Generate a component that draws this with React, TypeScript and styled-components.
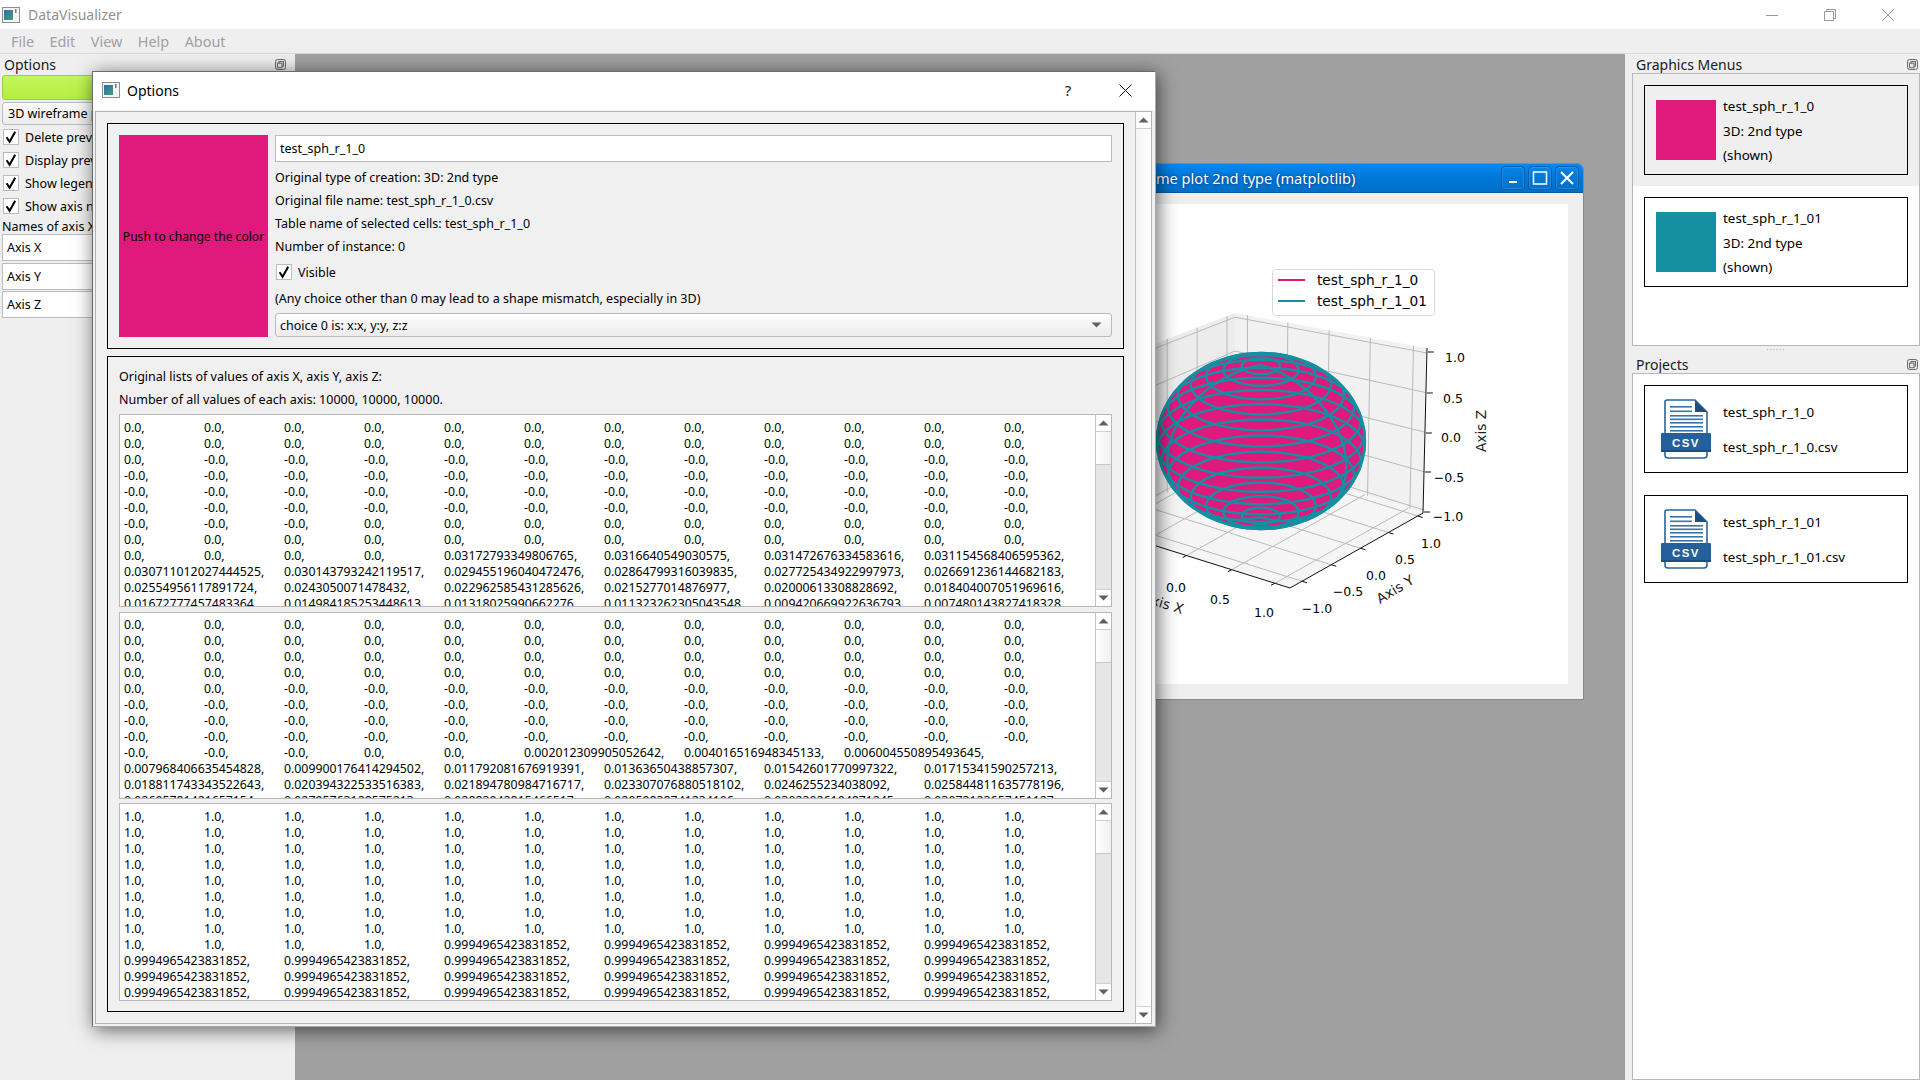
import { useMemo } from 'react';
import styled, { createGlobalStyle } from 'styled-components';

const PINK = '#e0197d';
const TEAL = '#158fa2';

const GlobalStyle = createGlobalStyle`
  html, body { margin: 0; padding: 0; width: 1920px; height: 1080px; overflow: hidden; background: #efefef; }
  * { box-sizing: border-box; }
  body { font-family: "Noto Sans", "Open Sans", sans-serif; font-size: 12.5px; color: #000; }
`;

const AppWindow = styled.div`
  position: relative;
  width: 1920px;
  height: 1080px;
  display: flex;
  flex-direction: column;
  overflow: hidden;
`;

const TitleBar = styled.div`
  height: 29px;
  background: #fff;
  display: flex;
  align-items: center;
  padding: 0 3px 0 2px;
  font-size: 14px;
  color: #8f8f8f;
`;

const TitleText = styled.span`
  flex: 1;
  margin-left: 8px;
`;

const WinButton = styled.div`
  width: 58px;
  height: 29px;
  display: flex;
  align-items: center;
  justify-content: center;
`;

const MenuBar = styled.div`
  height: 25px;
  background: #efefef;
  border-bottom: 1px solid #d9d9d9;
  display: flex;
  align-items: center;
  padding-left: 11px;
  gap: 15.5px;
  font-size: 14.4px;
  color: #a0a0a0;
`;

const Main = styled.div`
  flex: 1;
  display: flex;
  min-height: 0;
`;

const LeftDock = styled.div`
  width: 295px;
  background: #efefef;
  padding: 0 2px;
  display: flex;
  flex-direction: column;
`;

const DockTitle = styled.div<{ $h: number; $pad: number; $padRight: number; $padTop?: number }>`
  height: ${(p) => p.$h}px;
  display: flex;
  align-items: center;
  justify-content: space-between;
  font-size: 14px;
  color: #1a1a1a;
  padding-left: ${(p) => p.$pad}px;
  padding-right: ${(p) => p.$padRight}px;
  padding-top: ${(p) => p.$padTop ?? 0}px;
  flex: none;
`;

const GreenButton = styled.div`
  height: 25px;
  border: 1px solid #97cf45;
  border-radius: 3px;
  background: linear-gradient(#c4f65c, #b3ee3f);
  flex: none;
`;

const DockCombo = styled.div`
  margin-top: 2px;
  height: 23px;
  border: 1px solid #bcbcbc;
  border-radius: 3px;
  background: linear-gradient(#fafafa, #ececec);
  padding-left: 5px;
  line-height: 21px;
  font-size: 12.5px;
  white-space: nowrap;
`;

const CheckList = styled.div`
  margin-top: 4px;
  display: flex;
  flex-direction: column;
  gap: 7px;
`;

const CheckRow = styled.div`
  height: 16px;
  display: flex;
  align-items: center;
  gap: 6px;
  padding-left: 1px;
  white-space: nowrap;
`;

const CheckBox = styled.div`
  width: 16px;
  height: 16px;
  background: #fff;
  border: 1px solid #bcbcbc;
  display: flex;
  align-items: center;
  justify-content: center;
  flex: none;
`;

const NamesLabel = styled.div`
  margin-top: 4px;
  height: 16px;
  line-height: 17px;
  white-space: nowrap;
`;

const AxisInputs = styled.div`
  display: flex;
  flex-direction: column;
  gap: 1.5px;
`;

const AxisInput = styled.div`
  height: 27px;
  background: #fff;
  border: 1px solid #bcbcbc;
  padding-left: 4px;
  line-height: 25px;
`;

const Mdi = styled.div`
  flex: 1;
  position: relative;
  background: #a0a0a0;
`;

const SubWindow = styled.div`
  position: absolute;
  left: 765px;
  top: 109px;
  width: 524px;
  height: 537px;
  background: #efefef;
  border: 1px solid #7f8a94;
  border-radius: 6px 6px 0 0;
  display: flex;
  flex-direction: column;
`;

const SubTitle = styled.div`
  height: 29px;
  flex: none;
  background: linear-gradient(#0788f2 0%, #0079da 45%, #006fc6 100%);
  border-bottom: 1px solid #0a5a9e;
  border-radius: 5px 5px 0 0;
  display: flex;
  align-items: center;
  padding: 0 4px 0 24px;
  color: #fff;
  font-size: 14.6px;
  text-shadow: 0 0 3px rgba(0, 30, 70, 0.8);
`;

const SubTitleText = styled.span`
  flex: 1;
  white-space: nowrap;
`;

const SubButtons = styled.div`
  display: flex;
  gap: 3px;
`;

const SubButton = styled.div`
  width: 24px;
  height: 24px;
  border: 1px solid #0a5ea8;
  box-shadow: inset 0 0 0 1px rgba(120, 190, 250, 0.25);
  border-radius: 4px;
  display: flex;
  align-items: center;
  justify-content: center;
`;

const PlotCanvas = styled.div`
  margin: 11px 15px 15px 14px;
  flex: 1;
  background: #fff;
`;

const PlotSvg = styled.svg`
  display: block;
  width: 100%;
  height: 100%;
`;

const RightDock = styled.div`
  width: 295px;
  background: #efefef;
  padding-left: 7px;
  display: flex;
  flex-direction: column;
`;

const DockFrame = styled.div<{ $h?: number }>`
  border: 1px solid #b8b8b8;
  background: #fff;
  ${(p) => (p.$h ? `height: ${p.$h}px; flex: none;` : 'flex: 1;')}
`;

const DockSplitter = styled.div`
  height: 8px;
  flex: none;
  display: flex;
  align-items: center;
  justify-content: center;
  color: #aaa;
  font-size: 8px;
  letter-spacing: 1px;
  line-height: 8px;
`;

const GraphRow = styled.div<{ $selected?: boolean }>`
  height: 112px;
  padding: 11px;
  background: ${(p) => (p.$selected ? '#efefef' : '#fff')};
`;

const GraphCard = styled.div`
  height: 90px;
  border: 1px solid #000;
  display: flex;
  align-items: center;
  padding-left: 11px;
  gap: 7px;
`;

const Swatch = styled.div<{ $color: string }>`
  width: 60px;
  height: 60px;
  background: ${(p) => p.$color};
  flex: none;
`;

const CardLines = styled.div<{ $lh: number }>`
  font-size: 13.4px;
  line-height: ${(p) => p.$lh}px;
  padding-top: 2px;
  white-space: nowrap;
`;

const ProjectRow = styled.div`
  height: 110px;
  padding: 11px;
`;

const ProjectCard = styled.div`
  height: 88px;
  border: 1px solid #000;
  display: flex;
  align-items: center;
  padding-left: 16px;
  gap: 12px;
`;

/* Options dialog floating over the whole app */
const Dialog = styled.div`
  position: absolute;
  left: 92px;
  top: 71px;
  width: 1064px;
  height: 956px;
  background: #f0f0f0;
  border: 1px solid #6a6a6a;
  border-right-color: #a8a8a8;
  border-bottom-color: #a8a8a8;
  box-shadow: 2px 3px 18px rgba(0, 0, 0, 0.6);
  display: flex;
  flex-direction: column;
`;

const DialogTitle = styled.div`
  height: 38px;
  flex: none;
  background: #fff;
  display: flex;
  align-items: center;
  padding: 0 0 2px 9px;
  gap: 7px;
  font-size: 14px;
`;

const DialogTitleText = styled.span`
  flex: 1;
`;

const DialogAction = styled.div<{ $w: number }>`
  width: ${(p) => p.$w}px;
  display: flex;
  justify-content: center;
  font-size: 15px;
  color: #222;
`;

const DialogFrame = styled.div`
  flex: 1;
  margin: 1px 3px 2px 2px;
  border: 1px solid #b4b4b4;
  display: flex;
  min-height: 0;
`;

const DialogBody = styled.div`
  flex: 1;
  padding: 11px;
  display: flex;
  flex-direction: column;
  gap: 7px;
  min-width: 0;
`;

const Panel = styled.div`
  border: 1px solid #000;
  padding: 11px;
  flex: none;
`;

const TopPanel = styled(Panel)`
  height: 226px;
  display: flex;
  gap: 7px;
`;

const ColorButton = styled.div`
  width: 149px;
  height: 202px;
  background: ${PINK};
  display: flex;
  align-items: center;
  justify-content: center;
  white-space: nowrap;
  flex: none;
  font-size: 12.1px;
`;

const InfoColumn = styled.div`
  flex: 1;
  display: flex;
  flex-direction: column;
  min-width: 0;
`;

const NameInput = styled.div`
  height: 27px;
  background: #fff;
  border: 1px solid #bcbcbc;
  padding-left: 4px;
  line-height: 25px;
  margin-bottom: 4px;
  flex: none;
`;

const InfoLine = styled.div`
  height: 23px;
  line-height: 23px;
  white-space: nowrap;
  flex: none;
`;

const VisibleRow = styled.div`
  margin: 6px 0 7px;
  display: flex;
  align-items: center;
  height: 16px;
  gap: 6px;
  padding-left: 1px;
`;

const ChoiceCombo = styled.div`
  margin-top: 3px;
  height: 24px;
  flex: none;
  border: 1px solid #bcbcbc;
  border-radius: 3px;
  background: linear-gradient(#fdfdfd, #ececec);
  display: flex;
  align-items: center;
  justify-content: space-between;
  padding: 0 9px 0 4px;
`;

const BottomPanel = styled(Panel)`
  height: 656px;
  padding-top: 8px;
  display: flex;
  flex-direction: column;
`;

const Editors = styled.div`
  margin-top: 3px;
  display: flex;
  flex-direction: column;
  gap: 4.5px;
`;

const Editor = styled.div<{ $h: number }>`
  height: ${(p) => p.$h}px;
  background: #fff;
  border: 1px solid #b8b8b8;
  display: flex;
  overflow: hidden;
`;

const EditorText = styled.pre<{ $top: number }>`
  flex: 1;
  margin: 0;
  padding: ${(p) => p.$top}px 0 0 4px;
  font: inherit;
  font-size: 12.3px;
  line-height: 16px;
  tab-size: 80px;
  overflow: hidden;
  white-space: pre;
`;

const ScrollBar = styled.div`
  width: 16px;
  flex: none;
  border-left: 1px solid #c4c4c4;
  background: #e6e6e6;
  display: flex;
  flex-direction: column;
`;

const ScrollArrow = styled.div<{ $up?: boolean }>`
  height: 17px;
  flex: none;
  background: #fff;
  display: flex;
  align-items: center;
  justify-content: center;
  ${(p) => (p.$up ? 'border-bottom: 1px solid #d0d0d0;' : 'border-top: 1px solid #d0d0d0;')}
`;

const ScrollThumb = styled.div<{ $h: number }>`
  height: ${(p) => p.$h}px;
  flex: none;
  background: linear-gradient(90deg, #fff, #f0f0f0);
  border-bottom: 1px solid #c8c8c8;
`;

const ScrollTrack = styled.div`
  flex: 1;
`;

const OuterScroll = styled(ScrollBar)`
  background: linear-gradient(90deg, #f4f4f4, #fff);
  border-left: 1px solid #c0c0c0;
`;

const Triangle = ({ up }: { up?: boolean }) => (
  <svg width="11" height="6" viewBox="0 0 11 6">
    <path d={up ? 'M5.5 0.5 L10.5 5.5 H0.5 Z' : 'M0.5 0.5 H10.5 L5.5 5.5 Z'} fill="#5f5f5f" />
  </svg>
);

const Tick = () => (
  <svg width="14" height="14" viewBox="0 0 14 14">
    <path d="M2.6 7.2 L5.6 11.8 L11.2 1.8" fill="none" stroke="#000" strokeWidth="2" />
  </svg>
);

const AppIcon = () => (
  <svg width="18" height="16" viewBox="0 0 18 16">
    <defs>
      <linearGradient id="appIconFill" x1="0" y1="0" x2="1" y2="1">
        <stop offset="0" stopColor="#2f6fa8" />
        <stop offset="1" stopColor="#3fa07a" />
      </linearGradient>
    </defs>
    <rect x="0.5" y="0.5" width="17" height="15" fill="#f4f4f4" stroke="#8d8d8d" />
    <rect x="2" y="3" width="9" height="10" fill="url(#appIconFill)" />
    <rect x="13" y="2" width="1.5" height="4" fill="#777" />
  </svg>
);

const FloatIcon = () => (
  <svg width="11" height="11" viewBox="0 0 11 11">
    <rect x="0.5" y="0.5" width="10" height="10" rx="2" fill="#e6e6e6" stroke="#6a6a6a" />
    <rect x="4" y="2.5" width="4.5" height="4.5" fill="none" stroke="#6a6a6a" />
    <rect x="2.5" y="4.2" width="4.5" height="4.5" fill="#e6e6e6" stroke="#6a6a6a" />
  </svg>
);

const CsvIcon = () => (
  <svg width="50" height="60" viewBox="0 0 50 60">
    <path d="M6 1 H34 L46 13 V56 Q46 59 43 59 H7 Q4 59 4 56 V3 Q4 1 6 1 Z" fill="#fff" stroke="#2a6599" strokeWidth="1.6" />
    <path d="M34 1.5 L46 13 H34 Z" fill="#1f4f7e" />
    {[7, 11.5].map((y) => (
      <rect key={y} x="9" y={y} width="22" height="1.6" fill="#3a74a8" />
    ))}
    {[16, 19.5, 23, 27, 31].map((y) => (
      <rect key={y} x="9" y={y} width="33" height="1.6" fill="#3a74a8" />
    ))}
    <rect x="0" y="34" width="50" height="19" rx="1" fill="#26609a" />
    <rect x="0" y="51" width="50" height="2" fill="#1d4e80" />
    <text x="25" y="48" textAnchor="middle" fontFamily="'Liberation Sans', sans-serif" fontWeight="700" fontSize="11.5" letterSpacing="1.4" fill="#fff">
      CSV
    </text>
  </svg>
);

// data of the three text edits, tab separated like the Qt widget shows them
const rep = (s: string, n: number) => Array(n).fill(s);
const row = (...cells: string[]) => cells.join('\t');

const TEXT_X = [
  row(...rep('0.0,', 12)),
  row(...rep('0.0,', 12)),
  row('0.0,', ...rep('-0.0,', 11)),
  row(...rep('-0.0,', 12)),
  row(...rep('-0.0,', 12)),
  row(...rep('-0.0,', 12)),
  row(...rep('-0.0,', 3), ...rep('0.0,', 9)),
  row(...rep('0.0,', 12)),
  row(...rep('0.0,', 4), '0.03172793349806765,', '0.0316640549030575,', '0.031472676334583616,', '0.031154568406595362,'),
  row('0.030711012027444525,', '0.030143793242119517,', '0.029455196040472476,', '0.02864799316039835,', '0.027725434922997973,', '0.026691236144682183,'),
  row('0.02554956117891724,', '0.0243050071478432,', '0.022962585431285626,', '0.0215277014876977,', '0.02000613308828692,', '0.018404007051969616,'),
  row('0.01672777457483364,', '0.014984185253448613,', '0.01318025990662276,', '0.011323262305043548,', '0.009420669922636793,', '0.007480143827418328,'),
].join('\n');

const TEXT_Y = [
  row(...rep('0.0,', 12)),
  row(...rep('0.0,', 12)),
  row(...rep('0.0,', 12)),
  row(...rep('0.0,', 12)),
  row('0.0,', '0.0,', ...rep('-0.0,', 10)),
  row(...rep('-0.0,', 12)),
  row(...rep('-0.0,', 12)),
  row(...rep('-0.0,', 12)),
  row(...rep('-0.0,', 3), '0.0,', '0.0,', '0.002012309905052642,', '0.004016516948345133,', '0.006004550895493645,'),
  row('0.007968406635454828,', '0.009900176414294502,', '0.011792081676919391,', '0.01363650438857307,', '0.01542601770997322,', '0.01715341590257213,'),
  row('0.018811743343522643,', '0.020394322533516383,', '0.021894780984716717,', '0.023307076880518102,', '0.0246255234038092,', '0.025844811635778196,'),
  row('0.02695781421657154,', '0.02795763128575213,', '0.02883942815466517,', '0.02959838741234106,', '0.03023026194871245,', '0.03073123657451127,'),
].join('\n');

const NINES = '0.9994965423831852,';
const TEXT_Z = [
  ...rep(row(...rep('1.0,', 12)), 8),
  row(...rep('1.0,', 4), ...rep(NINES, 4)),
  ...rep(row(...rep(NINES, 6)), 3),
].join('\n');

// sphere wireframe, projected by hand
const CX = 1261;
const CY = 441;
const RX = 104;
const RY = 88;
const ELEV = (30 * Math.PI) / 180;

function project(x: number, y: number, z: number): [number, number] {
  return [CX + RX * x, CY - RY * (z * Math.cos(ELEV) - y * Math.sin(ELEV))];
}

function toPath(points: [number, number][]) {
  return points.map((p, i) => `${i ? 'L' : 'M'}${p[0].toFixed(1)} ${p[1].toFixed(1)}`).join('');
}

function sphereLines() {
  const paths: string[] = [];
  const rings = 17;
  for (let i = 1; i < rings; i++) {
    const phi = (i * Math.PI) / rings;
    const pts: [number, number][] = [];
    for (let a = 0; a <= 72; a++) {
      const t = (a * Math.PI) / 36;
      pts.push(project(Math.sin(phi) * Math.cos(t), Math.sin(phi) * Math.sin(t), Math.cos(phi)));
    }
    paths.push(toPath(pts));
  }
  // the arcs that cross the rings near the rims
  [-0.9, 0.82].forEach((k) => {
    const pts: [number, number][] = [];
    for (let a = 0; a <= 36; a++) {
      const phi = (a * Math.PI) / 36;
      pts.push(project(k * Math.sin(phi), Math.sqrt(1 - k * k) * Math.sin(phi), Math.cos(phi)));
    }
    paths.push(toPath(pts));
  });
  return paths;
}

type P = [number, number];
const mix = (a: P, b: P, t: number): P => [a[0] + (b[0] - a[0]) * t, a[1] + (b[1] - a[1]) * t];

const BT: P = [1235, 313];
const BB: P = [1235, 454];
const RT: P = [1427, 348];
const RB: P = [1423, 513];
const LT: P = [1102, 364];
const LB: P = [1102, 529];
const FR: P = [1290, 588];

const poly = (...pts: P[]) => pts.map((p) => p.join(',')).join(' ');

const Grid = styled.g`
  stroke: #b9b9b9;
  stroke-width: 1;
  fill: none;
`;

const AxisLines = styled.g`
  stroke: #111;
  stroke-width: 1;
  fill: none;
`;

const TickLabel = styled.text`
  font-family: 'DejaVu Sans', sans-serif;
  font-size: 12.5px;
  fill: #000;
  text-anchor: middle;
  dominant-baseline: central;
`;

const AxisLabel = styled(TickLabel)`
  font-size: 13.7px;
  fill: #222;
`;

const LegendText = styled(TickLabel)`
  font-size: 13.7px;
  text-anchor: start;
`;

const Seg = ({ a, b }: { a: P; b: P }) => <line x1={a[0]} y1={a[1]} x2={b[0]} y2={b[1]} />;

function Plot() {
  const wires = useMemo(() => sphereLines(), []);
  const rightU = [0.065, 0.275, 0.49, 0.705, 0.93];
  const leftU = [0.06, 0.285, 0.51, 0.735, 0.95];
  const zV = [0.03, 0.27, 0.51, 0.75, 0.98];
  const yTicks = [0.09, 0.31, 0.53, 0.74, 0.96];
  const xTicks = [0.08, 0.31, 0.55, 0.78, 0.97];

  return (
    <PlotSvg viewBox="1075 204 493 480">
      <polygon points={poly(BT, RT, RB, BB)} fill="#f1f1f1" />
      <polygon points={poly(BT, LT, LB, BB)} fill="#ececec" />
      <polygon points={poly(BB, RB, FR, LB)} fill="#f5f5f5" />
      <Grid>
        {rightU.map((u) => (
          <Seg key={u} a={mix(BT, RT, u)} b={mix(BB, RB, u)} />
        ))}
        {leftU.map((u) => (
          <Seg key={u} a={mix(BT, LT, u)} b={mix(BB, LB, u)} />
        ))}
        {zV.map((v) => (
          <g key={v}>
            <Seg a={mix(BT, BB, v)} b={mix(RT, RB, v)} />
            <Seg a={mix(BT, BB, v)} b={mix(LT, LB, v)} />
          </g>
        ))}
        {yTicks.map((u) => (
          <Seg key={u} a={mix(FR, RB, u)} b={mix(LB, BB, u)} />
        ))}
        {xTicks.map((u) => (
          <Seg key={u} a={mix(FR, LB, u)} b={mix(RB, BB, u)} />
        ))}
      </Grid>
      <AxisLines>
        <Seg a={[1427, 348]} b={RB} />
        <Seg a={RB} b={FR} />
        <Seg a={FR} b={LB} />
        {[352, 393, 433, 472, 512].map((y) => (
          <line key={y} x1={1424 + (512 - y) * 0.024} y1={y} x2={1430 + (512 - y) * 0.024} y2={y} />
        ))}
        {yTicks.map((u) => {
          const p = mix(FR, RB, u);
          return <line key={u} x1={p[0]} y1={p[1]} x2={p[0] + 5} y2={p[1] + 1.5} />;
        })}
        {xTicks.map((u) => {
          const p = mix(FR, LB, u);
          return <line key={u} x1={p[0]} y1={p[1]} x2={p[0] - 4} y2={p[1] + 2} />;
        })}
      </AxisLines>

      <ellipse cx={CX} cy={CY} rx={RX} ry={RY} fill={PINK} />
      <g stroke={TEAL} strokeWidth="2.4" fill="none">
        {wires.map((d) => (
          <path key={d} d={d} />
        ))}
        <ellipse cx={CX} cy={CY} rx={RX} ry={RY} />
      </g>

      <TickLabel x="1455" y="357">1.0</TickLabel>
      <TickLabel x="1453" y="398">0.5</TickLabel>
      <TickLabel x="1451" y="437">0.0</TickLabel>
      <TickLabel x="1449" y="477">−0.5</TickLabel>
      <TickLabel x="1448" y="516">−1.0</TickLabel>
      <AxisLabel x="1481" y="431" transform="rotate(-90 1481 431)">Axis Z</AxisLabel>

      <TickLabel x="1431" y="543">1.0</TickLabel>
      <TickLabel x="1405" y="559">0.5</TickLabel>
      <TickLabel x="1376" y="575">0.0</TickLabel>
      <TickLabel x="1348" y="591">−0.5</TickLabel>
      <TickLabel x="1317" y="608">−1.0</TickLabel>
      <AxisLabel x="1395" y="589" transform="rotate(-31 1395 589)">Axis Y</AxisLabel>

      <TickLabel x="1176" y="587">0.0</TickLabel>
      <TickLabel x="1220" y="599">0.5</TickLabel>
      <TickLabel x="1264" y="612">1.0</TickLabel>
      <AxisLabel x="1163" y="603" transform="rotate(17 1163 603)">Axis X</AxisLabel>

      <rect x="1272.5" y="269.5" width="162" height="46" rx="3" fill="#fff" stroke="#d8d8d8" />
      <line x1="1278" y1="280" x2="1305" y2="280" stroke={PINK} strokeWidth="2" />
      <line x1="1278" y1="301" x2="1305" y2="301" stroke={TEAL} strokeWidth="2" />
      <LegendText x="1317" y="280">test_sph_r_1_0</LegendText>
      <LegendText x="1317" y="301">test_sph_r_1_01</LegendText>
    </PlotSvg>
  );
}

const ScrollColumn = ({ thumb }: { thumb: number }) => (
  <ScrollBar>
    <ScrollArrow $up><Triangle up /></ScrollArrow>
    <ScrollThumb $h={thumb} />
    <ScrollTrack />
    <ScrollArrow><Triangle /></ScrollArrow>
  </ScrollBar>
);

const graphs = [
  { name: 'test_sph_r_1_0', color: PINK, selected: true },
  { name: 'test_sph_r_1_01', color: TEAL, selected: false },
];

export default function App() {
  return (
    <AppWindow>
      <GlobalStyle />
      <TitleBar>
        <AppIcon />
        <TitleText>DataVisualizer</TitleText>
        <WinButton>
          <svg width="12" height="12" viewBox="0 0 12 12"><line x1="0" y1="6.5" x2="12" y2="6.5" stroke="#999" /></svg>
        </WinButton>
        <WinButton>
          <svg width="12" height="12" viewBox="0 0 12 12"><path d="M2.5 2.5 V0.5 H11.5 V9.5 H9.5 M0.5 2.5 H9.5 V11.5 H0.5 Z" fill="none" stroke="#999" /></svg>
        </WinButton>
        <WinButton>
          <svg width="12" height="12" viewBox="0 0 12 12"><path d="M0 0 L12 12 M12 0 L0 12" stroke="#999" /></svg>
        </WinButton>
      </TitleBar>
      <MenuBar>
        <span>File</span>
        <span>Edit</span>
        <span>View</span>
        <span>Help</span>
        <span>About</span>
      </MenuBar>
      <Main>
        <LeftDock>
          <DockTitle $h={21} $pad={2} $padRight={7}>
            Options
            <FloatIcon />
          </DockTitle>
          <GreenButton />
          <DockCombo>3D wireframe plot 2nd type</DockCombo>
          <CheckList>
            {['Delete previous graph', 'Display previous graph', 'Show legend', 'Show axis names'].map((t) => (
              <CheckRow key={t}>
                <CheckBox><Tick /></CheckBox>
                {t}
              </CheckRow>
            ))}
          </CheckList>
          <NamesLabel>Names of axis X, Y, Z:</NamesLabel>
          <AxisInputs>
            <AxisInput>Axis X</AxisInput>
            <AxisInput>Axis Y</AxisInput>
            <AxisInput>Axis Z</AxisInput>
          </AxisInputs>
        </LeftDock>

        <Mdi>
          <SubWindow>
            <SubTitle>
              <SubTitleText>3D wireframe plot 2nd type (matplotlib)</SubTitleText>
              <SubButtons>
                <SubButton>
                  <svg width="14" height="14" viewBox="0 0 14 14"><rect x="3" y="10" width="8" height="2" fill="#fff" /></svg>
                </SubButton>
                <SubButton>
                  <svg width="16" height="16" viewBox="0 0 16 16"><rect x="1.5" y="2" width="13" height="12" fill="none" stroke="#fff" strokeWidth="1.5" /></svg>
                </SubButton>
                <SubButton>
                  <svg width="16" height="16" viewBox="0 0 16 16"><path d="M2 2 L14 14 M14 2 L2 14" stroke="#fff" strokeWidth="2" /></svg>
                </SubButton>
              </SubButtons>
            </SubTitle>
            <PlotCanvas>
              <Plot />
            </PlotCanvas>
          </SubWindow>
        </Mdi>

        <RightDock>
          <DockTitle $h={19} $pad={4} $padRight={2} $padTop={1}>
            Graphics Menus
            <FloatIcon />
          </DockTitle>
          <DockFrame $h={273}>
            {graphs.map((g) => (
              <GraphRow key={g.name} $selected={g.selected}>
                <GraphCard>
                  <Swatch $color={g.color} />
                  <CardLines $lh={24.5}>
                    {g.name}
                    <br />
                    3D: 2nd type
                    <br />
                    (shown)
                  </CardLines>
                </GraphCard>
              </GraphRow>
            ))}
          </DockFrame>
          <DockSplitter>······</DockSplitter>
          <DockTitle $h={19} $pad={4} $padRight={2} $padTop={1}>
            Projects
            <FloatIcon />
          </DockTitle>
          <DockFrame>
            {graphs.map((g) => (
              <ProjectRow key={g.name}>
                <ProjectCard>
                  <CsvIcon />
                  <CardLines $lh={35}>
                    {g.name}
                    <br />
                    {g.name}.csv
                  </CardLines>
                </ProjectCard>
              </ProjectRow>
            ))}
          </DockFrame>
        </RightDock>
      </Main>

      <Dialog>
        <DialogTitle>
          <AppIcon />
          <DialogTitleText>Options</DialogTitleText>
          <DialogAction $w={40}>?</DialogAction>
          <DialogAction $w={60}>
            <svg width="13" height="13" viewBox="0 0 13 13"><path d="M0.5 0.5 L12.5 12.5 M12.5 0.5 L0.5 12.5" stroke="#111" /></svg>
          </DialogAction>
        </DialogTitle>
        <DialogFrame>
          <DialogBody>
            <TopPanel>
              <ColorButton>Push to change the color</ColorButton>
              <InfoColumn>
                <NameInput>test_sph_r_1_0</NameInput>
                <InfoLine>Original type of creation: 3D: 2nd type</InfoLine>
                <InfoLine>Original file name: test_sph_r_1_0.csv</InfoLine>
                <InfoLine>Table name of selected cells: test_sph_r_1_0</InfoLine>
                <InfoLine>Number of instance: 0</InfoLine>
                <VisibleRow>
                  <CheckBox><Tick /></CheckBox>
                  Visible
                </VisibleRow>
                <InfoLine>(Any choice other than 0 may lead to a shape mismatch, especially in 3D)</InfoLine>
                <ChoiceCombo>
                  choice 0 is: x:x, y:y, z:z
                  <Triangle />
                </ChoiceCombo>
              </InfoColumn>
            </TopPanel>
            <BottomPanel>
              <InfoLine>Original lists of values of axis X, axis Y, axis Z:</InfoLine>
              <InfoLine>Number of all values of each axis: 10000, 10000, 10000.</InfoLine>
              <Editors>
                <Editor $h={193}>
                  <EditorText $top={5}>{TEXT_X}</EditorText>
                  <ScrollColumn thumb={33} />
                </Editor>
                <Editor $h={187}>
                  <EditorText $top={4}>{TEXT_Y}</EditorText>
                  <ScrollColumn thumb={33} />
                </Editor>
                <Editor $h={198}>
                  <EditorText $top={5}>{TEXT_Z}</EditorText>
                  <ScrollColumn thumb={33} />
                </Editor>
              </Editors>
            </BottomPanel>
          </DialogBody>
          <OuterScroll>
            <ScrollArrow $up><Triangle up /></ScrollArrow>
            <ScrollTrack />
            <ScrollArrow><Triangle /></ScrollArrow>
          </OuterScroll>
        </DialogFrame>
      </Dialog>
    </AppWindow>
  );
}
